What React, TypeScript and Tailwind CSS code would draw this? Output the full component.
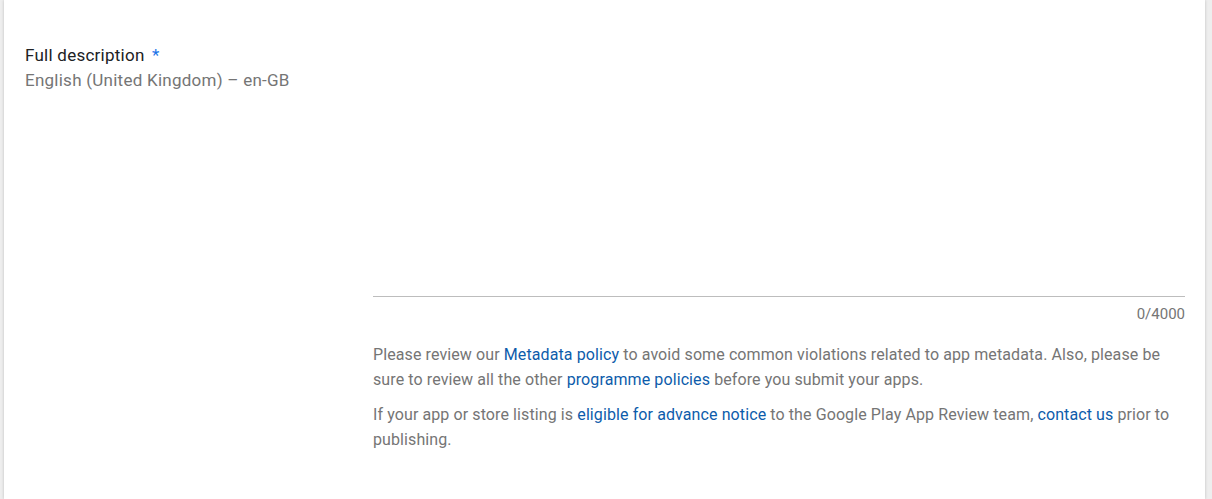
export default function App() {
  return (
    <div className="min-h-[499px] bg-[#eeeeee] pl-[4px] pr-[7px] font-['Roboto',sans-serif]">
      <div className="min-h-[499px] bg-white shadow-[0_0_3px_rgba(0,0,0,0.2)] flex pt-[43px] pl-[21px] pr-[20px]">
        <div className="w-[348px] shrink-0">
          <div className="text-[17px] leading-[25px] tracking-[0.25px] text-[#202124]">
            Full description <span className="text-[#1a73e8] ml-[3px]">*</span>
          </div>
          <div className="text-[17px] leading-[25px] tracking-[0.25px] text-[#757575]">
            English (United Kingdom) – en-GB
          </div>
        </div>
        <div className="flex-1">
          <div className="h-[254px] border-b border-[#bdbdbd]" />
          <div className="text-right text-[15px] leading-[20px] text-[#757575] mt-[7px]">0/4000</div>
          <div className="mt-[18px] text-[16px] leading-[25px] tracking-[0.1px] text-[#757575]">
            <p>
              Please review our <a className="text-[#0d5cab]">Metadata policy</a> to avoid some common violations
              related to app metadata. Also, please be sure to review all the other{" "}
              <a className="text-[#0d5cab]">programme policies</a> before you submit your apps.
            </p>
            <p className="mt-[10px]">
              If your app or store listing is <a className="text-[#0d5cab]">eligible for advance notice</a> to the
              Google Play App Review team, <a className="text-[#0d5cab]">contact us</a> prior to publishing.
            </p>
          </div>
        </div>
      </div>
    </div>
  );
}
